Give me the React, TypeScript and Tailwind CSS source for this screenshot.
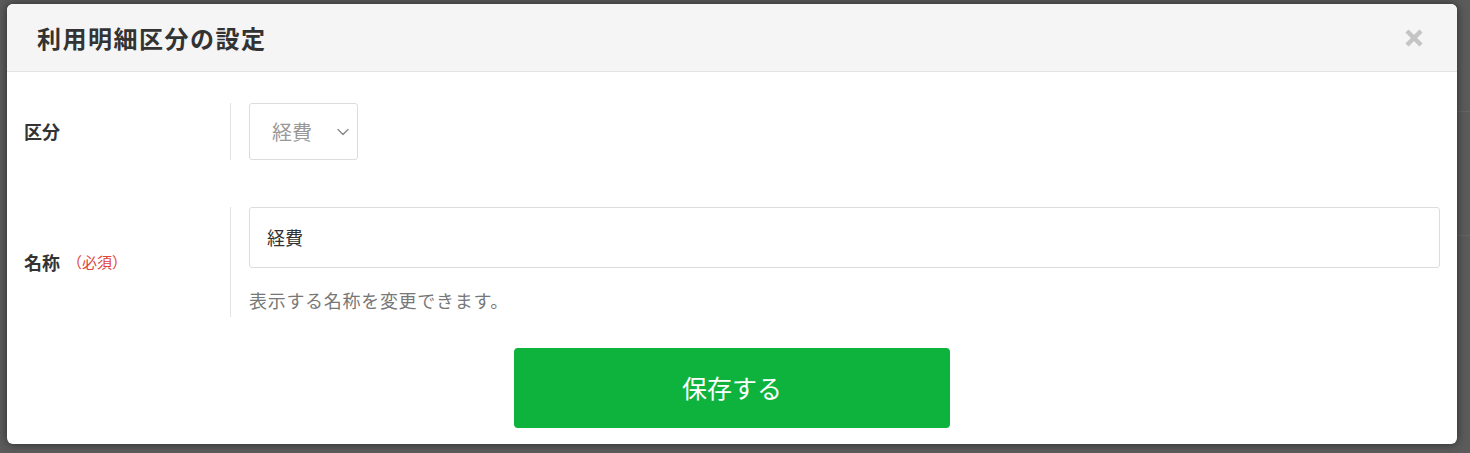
import { ChevronDown } from 'lucide-react';

const font = { fontFamily: '"Noto Sans CJK JP", "Noto Sans", sans-serif' };

export default function App() {
    return (
        <div className="h-[453px] w-[1470px] bg-[#5b5b5b] pt-[4px] pl-[7px]" style={font}>
            {/* faint lines of the page behind the overlay */}
            <div className="relative">
                <div className="absolute left-[1450px] top-[107px] h-px w-[20px] bg-[#666]" />
                <div className="absolute left-[1450px] top-[231px] h-px w-[20px] bg-[#666]" />
            </div>
            <div className="relative h-[440px] w-[1450px] overflow-hidden rounded-[6px] bg-white shadow-[0_0_10px_rgba(0,0,0,0.55)]">
                <div className="flex h-[68px] items-center justify-between border-b border-[#e3e3e3] bg-[#f5f5f5] pl-[30px] pr-[33px]">
                    <h1 className="text-[24px] font-bold tracking-[1.5px] text-[#333]">利用明細区分の設定</h1>
                    <svg width="20" height="20" viewBox="0 0 20 20" className="mt-[1px]">
                        <path d="M3 3L17 17M17 3L3 17" stroke="#c4c4c4" strokeWidth="4.5" strokeLinecap="butt" />
                    </svg>
                </div>

                <div className="pt-[31px] pr-[17px]">
                    <div className="flex">
                        <div className="flex w-[223px] items-center pl-[17px] text-[18px] font-bold text-[#333]">区分</div>
                        <div className="border-l border-[#e3e3e3] pl-[18px]">
                            <div className="flex h-[57px] w-[109px] items-center justify-between rounded-[3px] border border-[#dcdcdc] pl-[22px] pr-[4px] text-[20px] text-[#999]">
                                <span>経費</span>
                                <ChevronDown className="h-[20px] w-[20px] text-[#888]" strokeWidth={1.6} />
                            </div>
                        </div>
                    </div>

                    <div className="mt-[47px] flex">
                        <div className="flex w-[223px] items-center pl-[17px]">
                            <span className="text-[18px] font-bold text-[#333]">名称</span>
                            <span className="ml-[7px] text-[15px] text-[#e0443a]">（必須）</span>
                        </div>
                        <div className="flex-1 border-l border-[#e3e3e3] pl-[18px] pb-[4px]">
                            <div className="flex h-[61px] w-full items-center rounded-[3px] border border-[#dcdcdc] pl-[17px] text-[18px] text-[#333]">
                                経費
                            </div>
                            <p className="mt-[19px] text-[18px] leading-[26px] tracking-[0.7px] text-[#777]">表示する名称を変更できます。</p>
                        </div>
                    </div>
                </div>

                <div className="mt-[31px] flex justify-center">
                    <button className="h-[80px] w-[436px] rounded-[4px] bg-[#0db33d] text-[25px] text-white">保存する</button>
                </div>
            </div>
        </div>
    );
}
